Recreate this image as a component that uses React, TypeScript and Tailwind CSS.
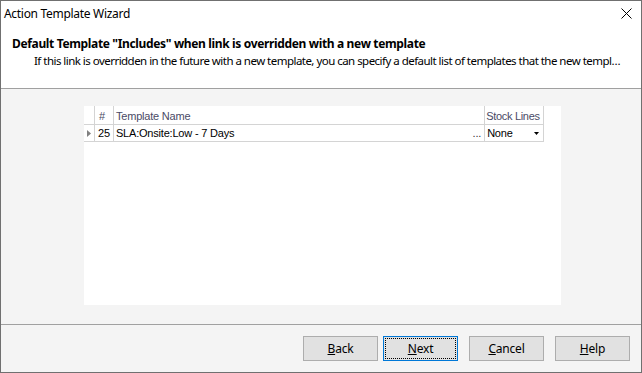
import React from "react";

const ui = { fontFamily: '"Segoe UI", "Noto Sans", "Open Sans", sans-serif' };
const grid = { fontFamily: 'Tahoma, "Liberation Sans", sans-serif' };

function Btn({ label, u, focused }: { label: string; u: number; focused?: boolean }) {
  return (
    <div
      className={
        "w-[75px] h-[25px] flex items-center justify-center text-[12px] text-black bg-[#e1e1e1] border " +
        (focused ? "border-[#0078d7]" : "border-[#adadad]")
      }
      style={ui}
    >
      <div
        className={
          "w-[71px] h-[21px] flex items-center justify-center " +
          (focused ? "border border-dotted border-black" : "")
        }
      >
        <span className="tracking-[-0.2px]">
          {label.slice(0, u)}
          <span className="underline underline-offset-[1px]">{label[u]}</span>
          {label.slice(u + 1)}
        </span>
      </div>
    </div>
  );
}

export default function App() {
  return (
    <div className="w-[642px] h-[373px] border border-[#707070] flex flex-col bg-[#f4f4f4] overflow-hidden" style={ui}>
      {/* header */}
      <div className="h-[88px] bg-white border-b border-[#a0a0a0] flex flex-col shrink-0">
        <div className="h-[25px] flex items-center justify-between pl-[3px] pr-[9px]">
          <span className="text-[12px] text-black tracking-[-0.3px]">Action Template Wizard</span>
          <svg width="11" height="11" viewBox="0 0 11 11">
            <path d="M0.5 0.5 L10.5 10.5 M10.5 0.5 L0.5 10.5" stroke="#000" strokeWidth="1" />
          </svg>
        </div>
        <div className="pl-[11px] pt-[10px] text-[12px] font-bold text-black leading-[15px] tracking-[-0.35px] whitespace-nowrap">
          Default Template "Includes" when link is overridden with a new template
        </div>
        <div className="pl-[33px] pr-[12px] pt-[2px] text-[11.5px] text-black leading-[16px] tracking-[-0.53px] whitespace-nowrap">
          If this link is overridden in the future with a new template, you can specify a default list of templates that the new templ…
        </div>
      </div>
      {/* body */}
      <div className="flex-1 pl-[83px] pt-[17px] pb-[17px]">
        <div className="w-[477px] h-[199px] bg-white tracking-[-0.2px]" style={grid}>
          <div className="w-[460px] flex flex-col text-[11px] whitespace-nowrap">
            <div className="flex h-[19px] border-b border-[#d4d4d4]">
              <div className="w-[11px] border-r border-[#d4d4d4]" />
              <div className="w-[19px] border-r border-[#d4d4d4] pl-[4px] pt-[2px] text-[#4a4a66] leading-[17px]">#</div>
              <div className="w-[372px] border-r border-[#d4d4d4] pl-[2px] pt-[2px] text-[#4a4a66] leading-[17px]">Template Name</div>
              <div className="w-[59px] border-r border-[#d4d4d4] pl-[1px] pt-[2px] text-[#4a4a66] leading-[17px] tracking-[-0.3px]">Stock Lines</div>
            </div>
            <div className="flex h-[17px] border-b border-[#d4d4d4]">
              <div className="w-[11px] border-r border-[#d4d4d4] flex items-center justify-center">
                <svg width="4" height="7" viewBox="0 0 4 7"><path d="M0 0 L4 3.5 L0 7 Z" fill="#808080" /></svg>
              </div>
              <div className="w-[19px] border-r border-[#d4d4d4] pl-[3px] text-black leading-[16px]">25</div>
              <div className="w-[372px] border-r border-[#d4d4d4] pl-[2px] pr-[3px] text-black leading-[16px] flex justify-between">
                <span>SLA:Onsite:Low - 7 Days</span>
                <span className="text-[#333]">...</span>
              </div>
              <div className="w-[59px] border-r border-[#d4d4d4] pl-[2px] pr-[4px] text-black leading-[16px] flex justify-between items-center overflow-hidden">
                <span>None</span>
                <svg width="5" height="3" viewBox="0 0 5 3"><path d="M0 0 L5 0 L2.5 3 Z" fill="#000" /></svg>
              </div>
            </div>
          </div>
        </div>
      </div>
      {/* footer */}
      <div className="h-[48px] border-t border-[#a0a0a0] shrink-0 flex pl-[302px] pt-[11px]">
        <Btn label="Back" u={0} />
        <div className="w-[5px]" />
        <Btn label="Next" u={0} focused />
        <div className="w-[11px]" />
        <Btn label="Cancel" u={0} />
        <div className="w-[11px]" />
        <Btn label="Help" u={0} />
      </div>
    </div>
  );
}
